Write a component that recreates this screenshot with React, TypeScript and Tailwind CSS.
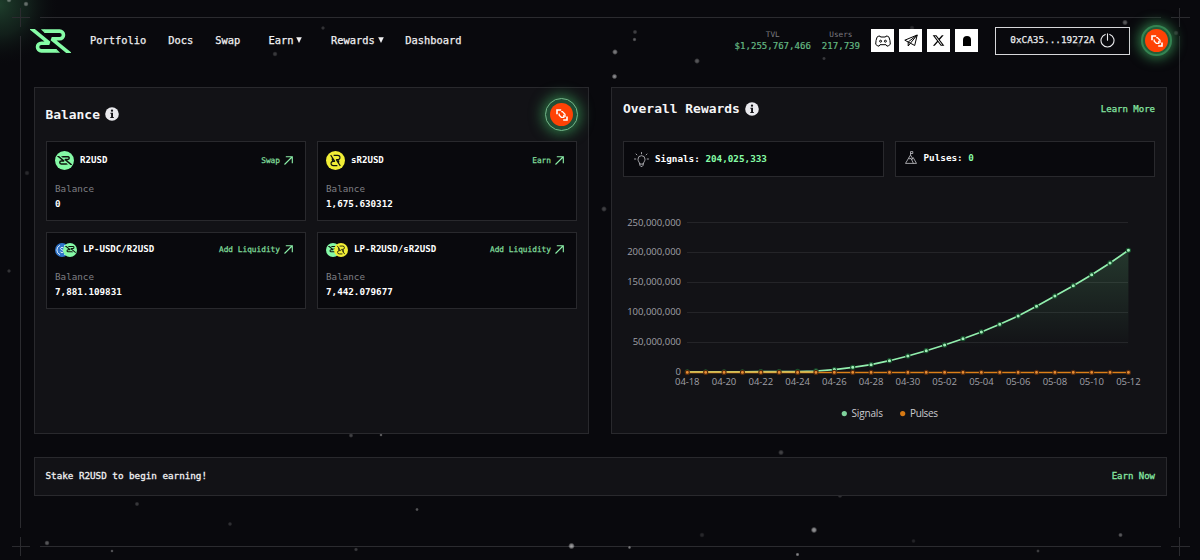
import React from "react";
import { FaXTwitter } from "react-icons/fa6";

function Mark({ className, width = 3.6 }: { className: string; width?: number }) {
  return (
    <svg viewBox="0 0 41.5 23.8" className={className} fill="none" stroke="currentColor" strokeWidth={width} strokeLinejoin="bevel">
      <path d="M14.5 1.9H30A3.9 3.9 0 0 1 30 9.7H22L40.6 25" />
      <path d="M27 21.9H11.5A3.9 3.9 0 0 1 11.5 14.1H19.5L.9 -1.2" />
      <path d="M11 .1H15V3.7ZM30.5 23.7H26.5V20.1Z" fill="currentColor" stroke="none" />
    </svg>
  );
}

const PARTICLES: [number, number, number, number][] = [
  [26, 4, 2, 0.4], [9, 0, 2, 0.4], [275, 54, 2, 0.22], [323, 28, 1.6, 0.2],
  [635, 32, 1.8, 0.25], [634.5, 39.5, 1.6, 0.35], [615, 52, 2.2, 0.5], [697, 61, 2.2, 0.35],
  [614.5, 76.5, 2.1, 0.55], [824, 58.5, 1.5, 0.22], [912, 28, 2, 0.15], [1125, 22.5, 2.2, 0.35],
  [1079, 45, 2, 0.12], [1176, 33, 2, 0.2], [27, 173, 2, 0.15], [9, 271, 1.6, 0.2],
  [604, 209, 2.2, 0.25], [351, 435.5, 1.8, 0.25], [381, 435, 1.3, 0.4], [137, 504, 1.8, 0.22],
  [417, 509.5, 1.4, 0.35], [230, 524, 1.7, 0.18], [47, 543, 2, 0.35], [112, 551, 1.3, 0.35],
  [356, 549.5, 1.6, 0.22], [571.5, 546, 2.5, 0.6], [781, 452.5, 2.2, 0.25], [840, 495.5, 2, 0.2],
  [702, 535, 2, 0.14], [814, 530, 2.4, 0.6], [629.5, 547.5, 1.3, 0.45], [797.5, 554.5, 1.5, 0.5],
  [913.5, 541, 1.7, 0.12], [1038, 551, 1.4, 0.25], [1120.5, 535, 1.8, 0.35],
];

function Backdrop() {
  return (
    <svg className="pointer-events-none absolute inset-0" width="1200" height="560">
      <defs>
        <radialGradient id="corner">
          <stop offset="0" stopColor="#35774d" stopOpacity="0.5" />
          <stop offset="0.5" stopColor="#265238" stopOpacity="0.3" />
          <stop offset="1" stopColor="#0a0a0e" stopOpacity="0" />
        </radialGradient>
        <radialGradient id="speck">
          <stop offset="0" stopColor="#fff" />
          <stop offset="0.5" stopColor="#fff" stopOpacity="0.75" />
          <stop offset="1" stopColor="#fff" stopOpacity="0" />
        </radialGradient>
      </defs>
      <circle cx="-2" cy="4" r="62" fill="url(#corner)" />
      <g stroke="#2b2b2f" shapeRendering="crispEdges">
        <path d="M40 17.5H1161M40 546.5H1161M20.5 36V528M1179.5 36V528" />
        <path d="M12 17.5H30M20.5 8V27M1171 17.5H1190M1179.5 8V27M12 546.5H30M20.5 537V556M1171 546.5H1190M1179.5 537V556" />
      </g>
      {PARTICLES.map(([x, y, r, o], i) => (
        <circle key={i} cx={x} cy={y} r={r * 1.35} fill="url(#speck)" opacity={o} />
      ))}
    </svg>
  );
}

function Glyph() {
  return (
    <svg viewBox="0 0 12 12" className="size-3" fill="none" stroke="#fff" strokeWidth="1.6">
      <path d="M1 5.2V1H5.2" />
      <path d="M3.2 4.6V6.2L5.3 8.3H7.8V5.8" strokeWidth="1.3" />
      <path d="M5.2 2.6H6.4L9 5.2V8" strokeWidth="1.3" />
      <path d="M11 7.4V11H7.2" />
    </svg>
  );
}

function NavLink({ label, menu }: { label: string; menu?: boolean }) {
  return (
    <a className="flex items-center gap-[3px]">
      {label}
      {menu && (
        <svg viewBox="0 0 6 6" className="size-[6px]" fill="currentColor">
          <path d="M0.2 0.2H5.8L3 6Z" />
        </svg>
      )}
    </a>
  );
}

function Stat({ label, value }: { label: string; value: string }) {
  return (
    <div className="flex flex-col items-center">
      <span className="text-[7.7px] leading-[11px] text-[#7c7c80]">{label}</span>
      <span className="text-[9.05px] leading-[13px] text-[#65b983] [-webkit-text-stroke:0.2px]">{value}</span>
    </div>
  );
}

function Social({ children }: { children: React.ReactNode }) {
  return <a className="flex size-[23px] items-center justify-center bg-white text-black">{children}</a>;
}

function Header() {
  return (
    <header className="flex h-[81px] items-center pl-[30px]">
      <Mark className="h-[24px] w-[41px] text-[#86fda6]" />
      <nav className="ml-[19px] flex items-center text-[10.4px] text-[#f0f0f2] [-webkit-text-stroke:0.25px]">
        <NavLink label="Portfolio" />
        <div className="ml-[22px]"><NavLink label="Docs" /></div>
        <div className="ml-[22px]"><NavLink label="Swap" /></div>
        <div className="ml-[28px]"><NavLink label="Earn" menu /></div>
        <div className="ml-[28.5px]"><NavLink label="Rewards" menu /></div>
        <div className="ml-[21.5px]"><NavLink label="Dashboard" /></div>
      </nav>
      <div className="ml-auto flex items-center pr-[28px]">
        <div className="mr-[11px] flex gap-[11px]">
          <Stat label="TVL" value="$1,255,767,466" />
          <Stat label="Users" value="217,739" />
        </div>
        <div className="flex gap-[5px]">
          <Social>
            <svg viewBox="0 0 16 12" className="h-3 w-4" fill="none" stroke="currentColor" strokeWidth="1" strokeLinejoin="round">
              <path d="M5 1L5.5 2H10.5L11 1C12.4 1 13.4 1.5 14 2.2C14.8 4.2 15.3 6.6 15.3 9.3C14.4 10.4 13.2 11 12 11.2L11 9.7H5L4 11.2C2.8 11 1.6 10.4.7 9.3C.7 6.6 1.2 4.2 2 2.2C2.6 1.5 3.6 1 5 1Z" />
              <circle cx="5.6" cy="6.2" r="1" />
              <circle cx="10.4" cy="6.2" r="1" />
            </svg>
          </Social>
          <Social>
            <svg viewBox="0 0 14 13" className="h-[13px] w-[14px]" fill="none" stroke="currentColor" strokeWidth="1" strokeLinejoin="round">
              <path d="M13.2 1L.8 6.2L4.2 8L10.7 11.5L13.2 1L4.2 8V12L6.4 9.2M13.2 1L6.4 9.2" />
            </svg>
          </Social>
          <Social><FaXTwitter size={13} /></Social>
          <Social>
            <svg viewBox="0 0 8 10" className="h-[10px] w-2" fill="currentColor">
              <path d="M0 10V4A4 4 0 0 1 8 4V10Z" />
            </svg>
          </Social>
        </div>
        <button className="ml-[17px] flex h-[28px] w-[135px] items-center justify-center gap-[5px] border border-[#d7d7da] text-[9.35px] text-[#ededf0] [-webkit-text-stroke:0.25px]">
          0xCA35...19272A
          <svg viewBox="0 0 15 15" className="size-[15px]" fill="none" stroke="currentColor" strokeWidth="1.1" strokeLinecap="round">
            <path d="M5.2 1.4A6.5 6.5 0 1 0 9.8 1.4M7.5 .8V7.2" />
          </svg>
        </button>
        <div className="ml-[11px] flex size-[31px] items-center justify-center rounded-full border-2 border-[#348452] bg-[#235c38] shadow-[0_0_12px_3px_#2c7042]">
          <div className="flex size-[23px] items-center justify-center rounded-full bg-[#ff4205]"><Glyph /></div>
        </div>
      </div>
    </header>
  );
}

type Coin = "r2" | "sr2" | "usdc";

function Token({ kind, small }: { kind: Coin; small?: boolean }) {
  const size = small ? "size-[14px]" : "size-[19px]";
  const color = kind === "r2" ? "bg-[#85f9a6]" : kind === "sr2" ? "bg-[#f1ee36]" : "bg-[#2f74c9]";
  return (
    <span className={`flex items-center justify-center rounded-full text-[#10130f] ${size} ${color}`}>
      {kind === "r2" && <Mark className={small ? "w-[11px]" : "w-[15px]"} width={4} />}
      {kind === "sr2" && (
        <svg viewBox="0 0 14 14" className={small ? "size-[10px]" : "size-[13px]"} fill="none" stroke="currentColor" strokeWidth="1.2" strokeLinejoin="bevel">
          <path d="M5 1.5H9.5A2.3 2.3 0 0 1 9.5 6.1H7.8L12.2 12.8M9 12.5H4.5A2.3 2.3 0 0 1 4.5 7.9H6.2L1.8 1.2M9.6 6.1A3 3 0 0 1 9.8 10M4.4 7.9A3 3 0 0 1 4.2 4" />
        </svg>
      )}
      {kind === "usdc" && (
        <svg viewBox="0 0 14 14" className="size-[14px]" fill="none" stroke="#dce9f8" strokeWidth="1">
          <path d="M5 2.3A5.1 5.1 0 0 0 5 11.7M9 2.3A5.1 5.1 0 0 1 9 11.7M8.7 5.4C8.5 4 5.5 4 5.5 5.6C5.5 7.2 8.7 6.6 8.7 8.3C8.7 10 5.4 9.9 5.3 8.5" />
        </svg>
      )}
    </span>
  );
}

function BalanceCard({ coins, name, action, amount }: { coins: Coin[]; name: string; action: string; amount: string }) {
  const pair = coins.length > 1;
  return (
    <div className={`flex flex-col border border-[#29292d] bg-[#09090d] pt-[9px] pr-[12px] pl-[8px] ${pair ? "h-[77px]" : "h-[80px]"}`}>
      <div className={`flex items-center ${pair ? "h-[15px]" : "h-[19px]"}`}>
        <Token kind={coins[0]} small={pair} />
        {pair && <span className="-ml-[6px]"><Token kind={coins[1]} small /></span>}
        <span className="ml-[6px] text-[9.1px] font-bold text-white">{name}</span>
        <span className="ml-auto text-[7.8px] text-[#80dd9b] [-webkit-text-stroke:0.25px]">{action}</span>
        <svg viewBox="0 0 9 9" className="ml-[4px] size-[9px] text-[#8cf0a9]" fill="none" stroke="currentColor" strokeWidth="1.1">
          <path d="M.5 8.5L8 1M1.8 .8H8.3V7.2" />
        </svg>
      </div>
      <span className={`text-[9.25px] leading-[12px] text-[#7f7f83] ${pair ? "mt-[14px]" : "mt-[13px]"}`}>Balance</span>
      <span className="mt-[3px] text-[9.25px] leading-[12px] font-bold text-white">{amount}</span>
    </div>
  );
}

function Title({ children }: { children: string }) {
  return (
    <h2 className="flex items-center gap-[5.5px] text-[12.95px] font-bold text-[#f5f5f7]">
      {children}
      <svg viewBox="0 0 14 14" className="size-[14px]">
        <circle cx="7" cy="7" r="6.8" fill="#e9e9ed" />
        <circle cx="7" cy="3.7" r="1.15" fill="#121216" />
        <path d="M5.4 5.8H8V10.1H8.8V11.1H5.3V10.1H6.1V6.8H5.4Z" fill="#121216" />
      </svg>
    </h2>
  );
}

function BalancePanel() {
  return (
    <section className="h-[347px] w-[555px] border border-[#29292d] bg-[#121216] px-[11px] pt-[10px]">
      <div className="flex h-[33px] items-center justify-between">
        <div className="-ml-[0.6px]"><Title>Balance</Title></div>
        <div className="-mr-px flex size-[33px] items-center justify-center rounded-full border border-[#74b78a] bg-[#214e35] shadow-[0_0_13px_3px_#2c7042]">
          <div className="flex size-[23px] items-center justify-center rounded-full bg-[#ff4205]"><Glyph /></div>
        </div>
      </div>
      <div className="mt-[10px] grid grid-cols-2 gap-[11px]">
        <BalanceCard coins={["r2"]} name="R2USD" action="Swap" amount="0" />
        <BalanceCard coins={["sr2"]} name="sR2USD" action="Earn" amount="1,675.630312" />
        <BalanceCard coins={["usdc", "r2"]} name="LP-USDC/R2USD" action="Add Liquidity" amount="7,881.109831" />
        <BalanceCard coins={["r2", "sr2"]} name="LP-R2USD/sR2USD" action="Add Liquidity" amount="7,442.079677" />
      </div>
    </section>
  );
}

const SIGNALS = [
  371.9, 371.9, 371.8, 371.8, 371.7, 371.6, 371.5, 371, 369.6, 367.3, 364.7, 360.7, 356, 350.7, 345,
  338.7, 332, 324.3, 316, 306.3, 296, 285.7, 274.7, 263, 250.3,
];
const TICKS = ["250,000,000", "200,000,000", "150,000,000", "100,000,000", "50,000,000", "0"];
const DATES = ["04-18", "04-20", "04-22", "04-24", "04-26", "04-28", "04-30", "05-02", "05-04", "05-06", "05-08", "05-10", "05-12"];
const px = (i: number) => 687.3 + i * 18.38;

function Chart() {
  const line = SIGNALS.map((y, i) => `${px(i)} ${y}`).join("L");
  return (
    <svg viewBox="612 199 553 232" className="h-[232px] w-[553px]" fontFamily="'Open Sans', sans-serif" fontSize="9.5">
      <defs>
        <linearGradient id="area" x1="0" x2="0" y1="250" y2="348" gradientUnits="userSpaceOnUse">
          <stop offset="0" stopColor="#86fda6" stopOpacity="0.16" />
          <stop offset="1" stopColor="#86fda6" stopOpacity="0" />
        </linearGradient>
      </defs>
      {TICKS.map((t, i) => (
        <g key={t}>
          {i < 5 && <path d={`M687 ${Math.round(222.3 + i * 29.9) + 0.5}H1128`} stroke="#242428" />}
          <text x="681" y={225.6 + i * 29.8} textAnchor="end" fill="#a0a0a6">{t}</text>
        </g>
      ))}
      <path d={`M${line}L${px(24)} 372L${px(0)} 372Z`} fill="url(#area)" />
      <path d={`M${line}`} fill="none" stroke="#92efae" strokeWidth="1.7" />
      {SIGNALS.map((y, i) => (
        <circle key={i} cx={px(i)} cy={y} r="2.1" fill="#a5eebb" stroke="#15512b" strokeWidth="1.1" />
      ))}
      <path d={`M${px(0)} 372.4H${px(24)}`} stroke="#dc7f18" strokeWidth="1.5" />
      <path d={`M${px(0)} 372H${px(7)}`} stroke="#d9ba50" strokeWidth="1.4" />
      {SIGNALS.map((_, i) => (
        <circle key={i} cx={px(i)} cy="372.4" r="2" fill="#e98e34" stroke="#52280c" strokeWidth="1.1" />
      ))}
      {DATES.map((d, i) => (
        <text key={d} x={px(i * 2)} y="385" textAnchor="middle" fill="#a0a0a6" textLength="24.5">{d}</text>
      ))}
      <circle cx="844.3" cy="413.6" r="2.6" fill="#7fd29c" />
      <text x="851.5" y="416.5" fill="#cacace" fontSize="10" textLength="31.5">Signals</text>
      <circle cx="902.7" cy="413.6" r="2.6" fill="#d67913" />
      <text x="910" y="416.5" fill="#cacace" fontSize="10" textLength="28">Pulses</text>
    </svg>
  );
}

function RewardsPanel() {
  return (
    <section className="h-[347px] w-[556px] border border-[#29292d] bg-[#121216] pt-[10px]">
      <div className="flex h-[22px] items-center justify-between px-[11px]">
        <Title>Overall Rewards</Title>
        <a className="mt-px text-[9px] text-[#86e6a2] [-webkit-text-stroke:0.25px]">Learn More</a>
      </div>
      <div className="mt-[21px] grid grid-cols-2 gap-[11px] px-[11px] text-[9.3px] font-bold text-white">
        <div className="flex h-[36px] items-center border border-[#29292d] bg-[#09090d] pl-[10px]">
          <svg viewBox="0 0 15 15" className="size-[15px]" fill="none" stroke="#c8c8cd" strokeWidth=".8" strokeLinecap="round">
            <path d="M7.5 .5V1.8M2 2L2.9 2.9M13 2L12.1 2.9M.5 7H1.8M13.2 7H14.5M5.8 11.7C5.6 10.3 4 9.5 4 7.2A3.5 3.5 0 0 1 11 7.2C11 9.5 9.4 10.3 9.2 11.7ZM5.8 11.7V13.2L6.8 14.4H8.2L9.2 13.2V11.7" />
          </svg>
          <span className="mb-px ml-[6px]">Signals: <span className="text-[#86fda6]">204,025,333</span></span>
        </div>
        <div className="flex h-[36px] items-center border border-[#29292d] bg-[#09090d] pl-[9px]">
          <svg viewBox="0 0 12 13" className="mb-[3px] h-[13px] w-[12px]" fill="none" stroke="#c8c8cd" strokeWidth=".8" strokeLinejoin="round">
            <path d="M.5 12.4L5.5 4L7.6 7.5M3.6 7.2L5 8L6 7.2L8.4 12.4M6.5 9L8.2 6.6L11.5 12.4H.5M5.5 4V.6H7.8V2.5H5.5" />
          </svg>
          <span className="mb-[2px] ml-[7px]">Pulses: <span className="text-[#86fda6]">0</span></span>
        </div>
      </div>
      <div className="mt-[22px]"><Chart /></div>
    </section>
  );
}

export default function App() {
  return (
    <div className="relative h-[560px] w-[1200px] overflow-hidden bg-[#09090d] font-['DejaVu_Sans_Mono',monospace]">
      <Backdrop />
      <div className="relative">
        <Header />
        <main className="pt-[6px] pr-[33px] pl-[34px]">
          <div className="flex justify-between">
            <BalancePanel />
            <RewardsPanel />
          </div>
          <div className="mt-[23px] flex h-[39px] items-center justify-between border border-[#29292d] bg-[#121216] pr-[11px] pl-[10.5px] text-[9.25px] text-[#f0f0f2] [-webkit-text-stroke:0.3px]">
            <span className="-mt-px">Stake R2USD to begin earning!</span>
            <a className="text-[9px] text-[#86e6a2]">Earn Now</a>
          </div>
        </main>
      </div>
    </div>
  );
}
